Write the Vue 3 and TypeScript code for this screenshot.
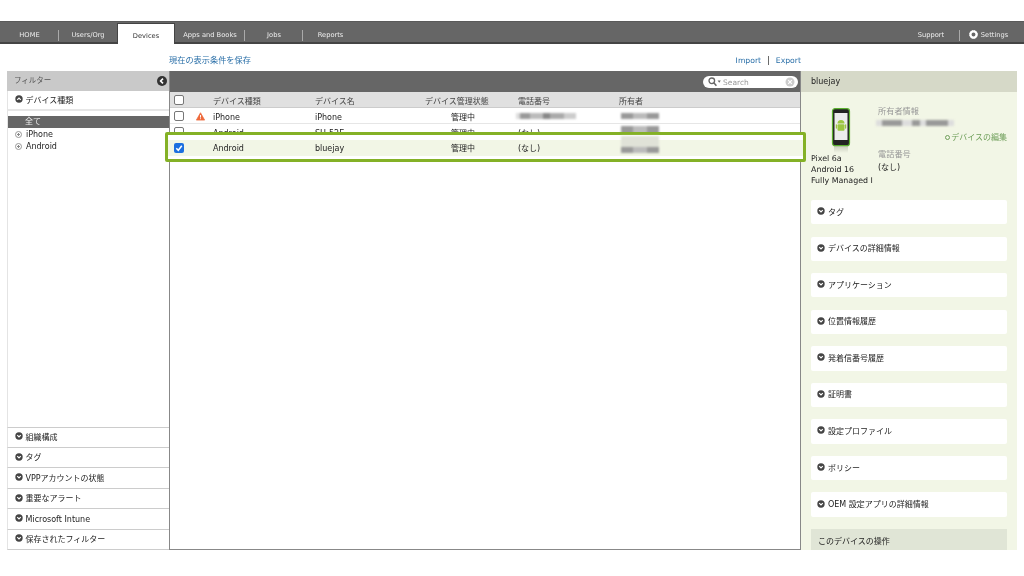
<template>
  <div class="page">
    <nav class="nav">
      <a
        v-for="tab in tabs"
        :key="tab.label"
        class="tab"
        :class="{ active: tab.active, plain: tab.plain }"
        :style="{ width: tab.width + 'px' }"
      >{{ tab.label }}</a>
      <div class="nav-right">
        <a class="tab support">Support</a>
        <a class="tab settings plain">
          <svg class="gear" viewBox="0 0 10 10">
            <circle cx="5" cy="5" r="3.4" fill="none" stroke="#fff" stroke-width="2.4" />
            <circle cx="5" cy="5" r="4.4" fill="none" stroke="#fff" stroke-width="1" stroke-dasharray="1.2 1.1" />
          </svg>
          Settings
        </a>
      </div>
    </nav>

    <div class="subbar">
      <a class="link save">現在の表示条件を保存</a>
      <div class="subbar-right">
        <a class="link">Import</a>
        <span class="sep">|</span>
        <a class="link">Export</a>
      </div>
    </div>

    <main class="main">
      <aside class="filter">
        <div class="filter-head">
          <span>フィルター</span>
          <svg class="collapse" viewBox="0 0 10 10">
            <circle cx="5" cy="5" r="5" fill="#333" />
            <path d="M6 2.6 3.6 5 6 7.4" fill="none" stroke="#fff" stroke-width="1.6" />
          </svg>
        </div>
        <div class="acc open">
          <svg class="chev" viewBox="0 0 10 10">
            <circle cx="5" cy="5" r="4.6" fill="#444" />
            <path d="M2.8 6 5 3.8 7.2 6" fill="none" stroke="#fff" stroke-width="1.5" />
          </svg>
          デバイス種類
        </div>
        <div class="filter-list">
          <div class="all">全て</div>
          <div v-for="item in deviceKinds" :key="item" class="kind">
            <span class="radio"></span>{{ item }}
          </div>
        </div>
        <div v-for="item in filters" :key="item" class="acc">
          <svg class="chev" viewBox="0 0 10 10">
            <circle cx="5" cy="5" r="4.6" fill="#444" />
            <path d="M2.8 4 5 6.2 7.2 4" fill="none" stroke="#fff" stroke-width="1.5" />
          </svg>
          <span :class="{ latin: item === 'Microsoft Intune' }">{{ item }}</span>
        </div>
      </aside>

      <section class="list">
        <div class="toolbar">
          <div class="search">
            <svg class="glass" viewBox="0 0 13 10">
              <circle cx="3.8" cy="3.8" r="2.8" fill="none" stroke="#666" stroke-width="1.3" />
              <path d="M5.8 5.8 8.4 8.8" stroke="#666" stroke-width="1.5" />
              <path d="M9.6 3.5h3.2L11.2 5.8z" fill="#666" />
            </svg>
            <span class="placeholder">Search</span>
            <svg class="clear" viewBox="0 0 10 10">
              <circle cx="5" cy="5" r="4.5" fill="#ccc" />
              <path d="M3.2 3.2 6.8 6.8M6.8 3.2 3.2 6.8" stroke="#fff" stroke-width="1.1" />
            </svg>
          </div>
        </div>
        <div class="row head">
          <span class="cell-check"><span class="check"></span></span>
          <span></span>
          <span>デバイス種類</span>
          <span>デバイス名</span>
          <span>デバイス管理状態</span>
          <span>電話番号</span>
          <span>所有者</span>
        </div>
        <div
          v-for="row in rows"
          :key="row.name"
          class="row"
          :class="{ selected: row.selected }"
        >
          <span class="cell-check">
            <span class="check" :class="{ on: row.selected }">
              <svg v-if="row.selected" viewBox="0 0 10 10">
                <path d="M2.3 5.2 4.3 7.3 7.8 2.8" fill="none" stroke="#fff" stroke-width="1.5" />
              </svg>
            </span>
          </span>
          <span class="cell-warn">
            <svg v-if="row.warn" class="warn" viewBox="0 0 10 10">
              <path d="M5 .8 9.6 9H.4z" fill="#ee6a3c" stroke="#ee6a3c" stroke-linejoin="round" stroke-width=".8" />
              <path d="M5 3.4V6.2M5 7v1" stroke="#fff" stroke-width="1.1" />
            </svg>
          </span>
          <span class="name">{{ row.type }}</span>
          <span class="name">{{ row.name }}</span>
          <span class="state">管理中</span>
          <span>
            <span v-if="row.phoneHidden" class="mosaic phone"></span>
            <template v-else>(なし)</template>
          </span>
          <span><span class="mosaic owner" :class="{ tall: row.tall }"></span></span>
        </div>
      </section>

      <aside class="detail">
        <div class="detail-head">bluejay</div>
        <div class="detail-body">
          <div class="device">
            <div class="device-left">
              <svg class="phone-icon" viewBox="0 0 20 45">
                <defs>
                  <linearGradient id="shadow" x1="0" x2="0" y1="0" y2="1">
                    <stop offset="0" stop-color="#c9cdbd" />
                    <stop offset="1" stop-color="#f2f6e6" />
                  </linearGradient>
                </defs>
                <rect x="3" y="38" width="14" height="7" fill="url(#shadow)" />
                <rect x="1.5" y=".7" width="17" height="37" rx="2.5" fill="#222" stroke="#5cb030" stroke-width="1.2" />
                <rect x="3.5" y="5" width="13" height="27" fill="#ececec" />
                <path d="M6.5 15.500a3.5 3.5 0 0 1 7 0z" fill="#9cc641" />
                <rect x="6.5" y="16.2" width="7" height="6.5" rx="1" fill="#9cc641" />
                <rect x="4.8" y="16.2" width="1.2" height="4.5" rx=".6" fill="#9cc641" />
                <rect x="14" y="16.2" width="1.2" height="4.5" rx=".6" fill="#9cc641" />
              </svg>
              <div class="device-name">Pixel 6a<br />Android 16<br />Fully Managed I</div>
            </div>
            <div class="device-right">
              <div class="label">所有者情報</div>
              <span class="mosaic info"></span>
              <a class="edit"><span class="ring"></span>デバイスの編集</a>
              <div class="label tel">電話番号</div>
              <div class="value">(なし)</div>
            </div>
          </div>
          <div v-for="item in sections" :key="item" class="card">
            <svg class="chev" viewBox="0 0 10 10">
              <circle cx="5" cy="5" r="4.6" fill="#444" />
              <path d="M2.8 4 5 6.2 7.2 4" fill="none" stroke="#fff" stroke-width="1.5" />
            </svg>
            {{ item }}
          </div>
          <div class="actions">このデバイスの操作</div>
        </div>
      </aside>
    </main>
  </div>
</template>

<script setup lang="ts">
interface Tab {
  label: string
  width: number
  active?: boolean
  plain?: boolean
}

interface Row {
  type: string
  name: string
  warn?: boolean
  selected?: boolean
  phoneHidden?: boolean
  tall?: boolean
}

const tabs: Tab[] = [
  { label: 'HOME', width: 59 },
  { label: 'Users/Org', width: 58, plain: true },
  { label: 'Devices', width: 58, active: true },
  { label: 'Apps and Books', width: 70 },
  { label: 'Jobs', width: 58 },
  { label: 'Reports', width: 55, plain: true }
]

const deviceKinds = ['iPhone', 'Android']

const filters = [
  '組織構成',
  'タグ',
  'VPPアカウントの状態',
  '重要なアラート',
  'Microsoft Intune',
  '保存されたフィルター'
]

const rows: Row[] = [
  { type: 'iPhone', name: 'iPhone', warn: true, phoneHidden: true },
  { type: 'Android', name: 'SH-52E', tall: true },
  { type: 'Android', name: 'bluejay', selected: true }
]

const sections = [
  'タグ',
  'デバイスの詳細情報',
  'アプリケーション',
  '位置情報履歴',
  '発着信番号履歴',
  '証明書',
  '設定プロファイル',
  'ポリシー',
  'OEM 設定アプリの詳細情報'
]
</script>

<style>
html,
body {
  margin: 0;
  background: #fff;
}
</style>

<style scoped>
.page {
  width: 1024px;
  height: 576px;
  overflow: hidden;
  padding-top: 21px;
  box-sizing: border-box;
  background: #fff;
  color: #222;
  font-family: "DejaVu Sans", "Noto Sans CJK JP", sans-serif;
  font-size: 8px;
  filter: blur(0.2px);
}

.nav {
  display: flex;
  height: 23px;
  box-sizing: border-box;
  background: #666;
  border-top: 1px solid #5a5a5a;
  border-bottom: 2px solid #444;
}

.tab {
  position: relative;
  display: flex;
  align-items: center;
  justify-content: center;
  box-sizing: border-box;
  padding-top: 5px;
  color: #eee;
  font-size: 6.7px;
}

.tab::after {
  content: "";
  position: absolute;
  right: 0;
  top: 8px;
  bottom: 1px;
  width: 1px;
  background: #aaa;
}

.tab.plain::after {
  display: none;
}

.tab.active {
  height: 21px;
  margin-top: 1px;
  padding-top: 4px;
  background: #fff;
  color: #333;
  border: 1px solid #444;
  border-bottom: 0;
}

.tab.active::after {
  display: none;
}

.nav-right {
  margin-left: auto;
  display: flex;
}

.support {
  width: 60px;
  padding-left: 2px;
}

.settings {
  width: 64px;
  gap: 3px;
  padding-right: 7px;
}

.gear {
  width: 9px;
  height: 9px;
}

.subbar {
  display: flex;
  justify-content: space-between;
  align-items: center;
  height: 27px;
  box-sizing: border-box;
  padding: 3px 223px 0 169px;
}

.subbar-right {
  display: flex;
  gap: 6px;
  padding-top: 2px;
}

.link {
  color: #2a6fa8;
  font-size: 7.7px;
}

.link.save {
  font-size: 8.2px;
}

.main {
  display: flex;
  height: 479px;
  margin: 0 7px;
}

.filter {
  display: flex;
  flex-direction: column;
  width: 162px;
  background: #fff;
}

.filter-head {
  display: flex;
  align-items: center;
  justify-content: space-between;
  height: 20px;
  flex: none;
  box-sizing: border-box;
  padding: 0 2px 0 7px;
  background: #c9c9c9;
  color: #555;
  font-size: 7.5px;
}

.filter-head span {
  padding-bottom: 3px;
}

.collapse {
  width: 10px;
  height: 10px;
}

.acc {
  display: flex;
  align-items: center;
  gap: 3px;
  flex: none;
  height: 20.4px;
  box-sizing: border-box;
  padding: 0 0 2px 6.5px;
  border-bottom: 1px solid #ccc;
  border-left: 1px solid #e4e4e4;
}

.acc.open {
  height: 20px;
  border-bottom: 2px solid #e6e6e6;
}

.latin {
  padding-top: 3px;
}

.chev {
  width: 8px;
  height: 8px;
  flex: none;
}

.filter-list {
  flex: 1;
  padding-top: 5px;
  border-left: 1px solid #e4e4e4;
  border-bottom: 1px solid #ccc;
}

.all {
  height: 12px;
  line-height: 12px;
  padding-left: 17px;
  background: #666;
  color: #eee;
}

.kind {
  display: flex;
  align-items: center;
  gap: 4px;
  height: 12px;
  padding-left: 7px;
}

.radio {
  width: 5px;
  height: 5px;
  border: 1px solid #999;
  border-radius: 50%;
  background: radial-gradient(circle, #888 0 1px, #fff 1.2px);
}

.list {
  flex: 1;
  min-width: 0;
  border-left: 1px solid #888;
  border-right: 1px solid #888;
  border-bottom: 1px solid #888;
}

.toolbar {
  display: flex;
  justify-content: flex-end;
  align-items: center;
  height: 21px;
  box-sizing: border-box;
  padding: 1px 2px 0 0;
  background: #666;
}

.search {
  display: flex;
  align-items: center;
  width: 95px;
  height: 12px;
  box-sizing: border-box;
  padding: 0 3px 0 5px;
  border-radius: 6px;
  background: #fff;
}

.glass {
  width: 13px;
  height: 10px;
  margin-right: 2px;
}

.placeholder {
  flex: 1;
  color: #999;
  font-size: 7.5px;
}

.clear {
  width: 10px;
  height: 10px;
}

.row {
  display: grid;
  grid-template-columns: 25px 18px 102px 110px 93px 101px 1fr;
  align-items: center;
  height: 16px;
  box-sizing: border-box;
  padding-top: 1px;
  border-bottom: 1px solid #e6e6e6;
}

.row.head {
  background: #e0e0e0;
  border-bottom: 1px solid #ccc;
  color: #444;
}

.name {
  padding-top: 2px;
}

.state {
  padding-left: 26px;
}

.cell-check {
  display: flex;
  padding-left: 4px;
}

.check {
  display: block;
  width: 10px;
  height: 10px;
  box-sizing: border-box;
  border: 1px solid #777;
  border-radius: 2px;
  background: #fff;
}

.check.on {
  border: 0;
  background: #1c6fe0;
}

.check svg {
  display: block;
  width: 10px;
  height: 10px;
}

.cell-warn {
  display: flex;
  padding-left: 1px;
}

.warn {
  width: 9px;
  height: 9px;
}

.row.selected {
  position: relative;
  padding-top: 0;
  background: #f2f6e6;
}

.row.selected > * {
  position: relative;
}

.row.selected::before {
  content: "";
  position: absolute;
  left: -5px;
  right: -6px;
  top: -8px;
  bottom: -7px;
  border: 3px solid #84b126;
  border-radius: 2px;
  background: linear-gradient(#fff 0 5px, #f2f6e6 5px 21px, #fff 21px);
}

.mosaic {
  display: block;
  height: 6px;
  filter: blur(0.8px);
}

.mosaic.phone {
  width: 60px;
  margin-left: -2px;
  background: linear-gradient(90deg, #ddd 0 4px, #999 4px 14px, #bbb 14px 27px, #888 27px 34px, #aaa 34px 48px, #ccc 48px 60px);
}

.mosaic.owner {
  width: 38px;
  margin-left: 2px;
  background: linear-gradient(90deg, #999 0 12px, #bbb 12px 26px, #999 26px 38px);
}

.mosaic.owner.tall {
  height: 12px;
}

.selected .mosaic.owner {
  height: 17px;
  margin-top: -6px;
  background: linear-gradient(#e0e2d8 0 11px, transparent 11px), linear-gradient(90deg, #999 0 12px, #bbb 12px 26px, #999 26px 38px);
}

.detail {
  display: flex;
  flex-direction: column;
  width: 216px;
  flex: none;
  background: #f2f6e6;
}

.detail-head {
  flex: none;
  height: 20.5px;
  line-height: 21px;
  padding-left: 10px;
  background: #d6d9c8;
}

.detail-body {
  flex: 1;
  min-height: 0;
  overflow: hidden;
  padding: 0 10px;
}

.device {
  display: flex;
  height: 108.5px;
  padding-top: 15px;
  box-sizing: border-box;
}

.device-left {
  width: 67px;
  flex: none;
}

.phone-icon {
  display: block;
  width: 20px;
  height: 45px;
  margin: 1px 0 0 20px;
}

.device-name {
  white-space: nowrap;
  line-height: 11px;
  font-size: 7.9px;
}

.device-right {
  flex: 1;
  min-width: 0;
  display: flex;
  flex-direction: column;
}

.label {
  margin-top: -2px;
  color: #999;
  font-size: 8.2px;
  line-height: 12px;
}

.tel {
  margin-top: 4px;
}

.value {
  margin-top: 2px;
  line-height: 12px;
}

.mosaic.info {
  width: 78px;
  margin: 3px 0 0 -2px;
  flex: none;
  background: linear-gradient(90deg, #ddd 0 6px, #999 6px 26px, #ddd 26px 36px, #999 36px 44px, #ddd 44px 50px, #999 50px 72px, #ddd 72px);
}

.edit {
  align-self: flex-end;
  display: flex;
  align-items: center;
  gap: 1px;
  margin-top: 6px;
  color: #6f9f5a;
  line-height: 12px;
}

.ring {
  width: 3px;
  height: 3px;
  border: 1px solid #6f9f5a;
  border-radius: 50%;
}

.card {
  display: flex;
  align-items: center;
  gap: 3px;
  height: 24.4px;
  padding: 0 0 2px 6px;
  margin-bottom: 12.17px;
  border-radius: 2px;
  background: #fff;
  box-sizing: border-box;
}

.actions {
  height: 30px;
  padding: 7px 7px 5px;
  box-sizing: border-box;
  background: #e0e5d6;
  line-height: 12px;
}
</style>
